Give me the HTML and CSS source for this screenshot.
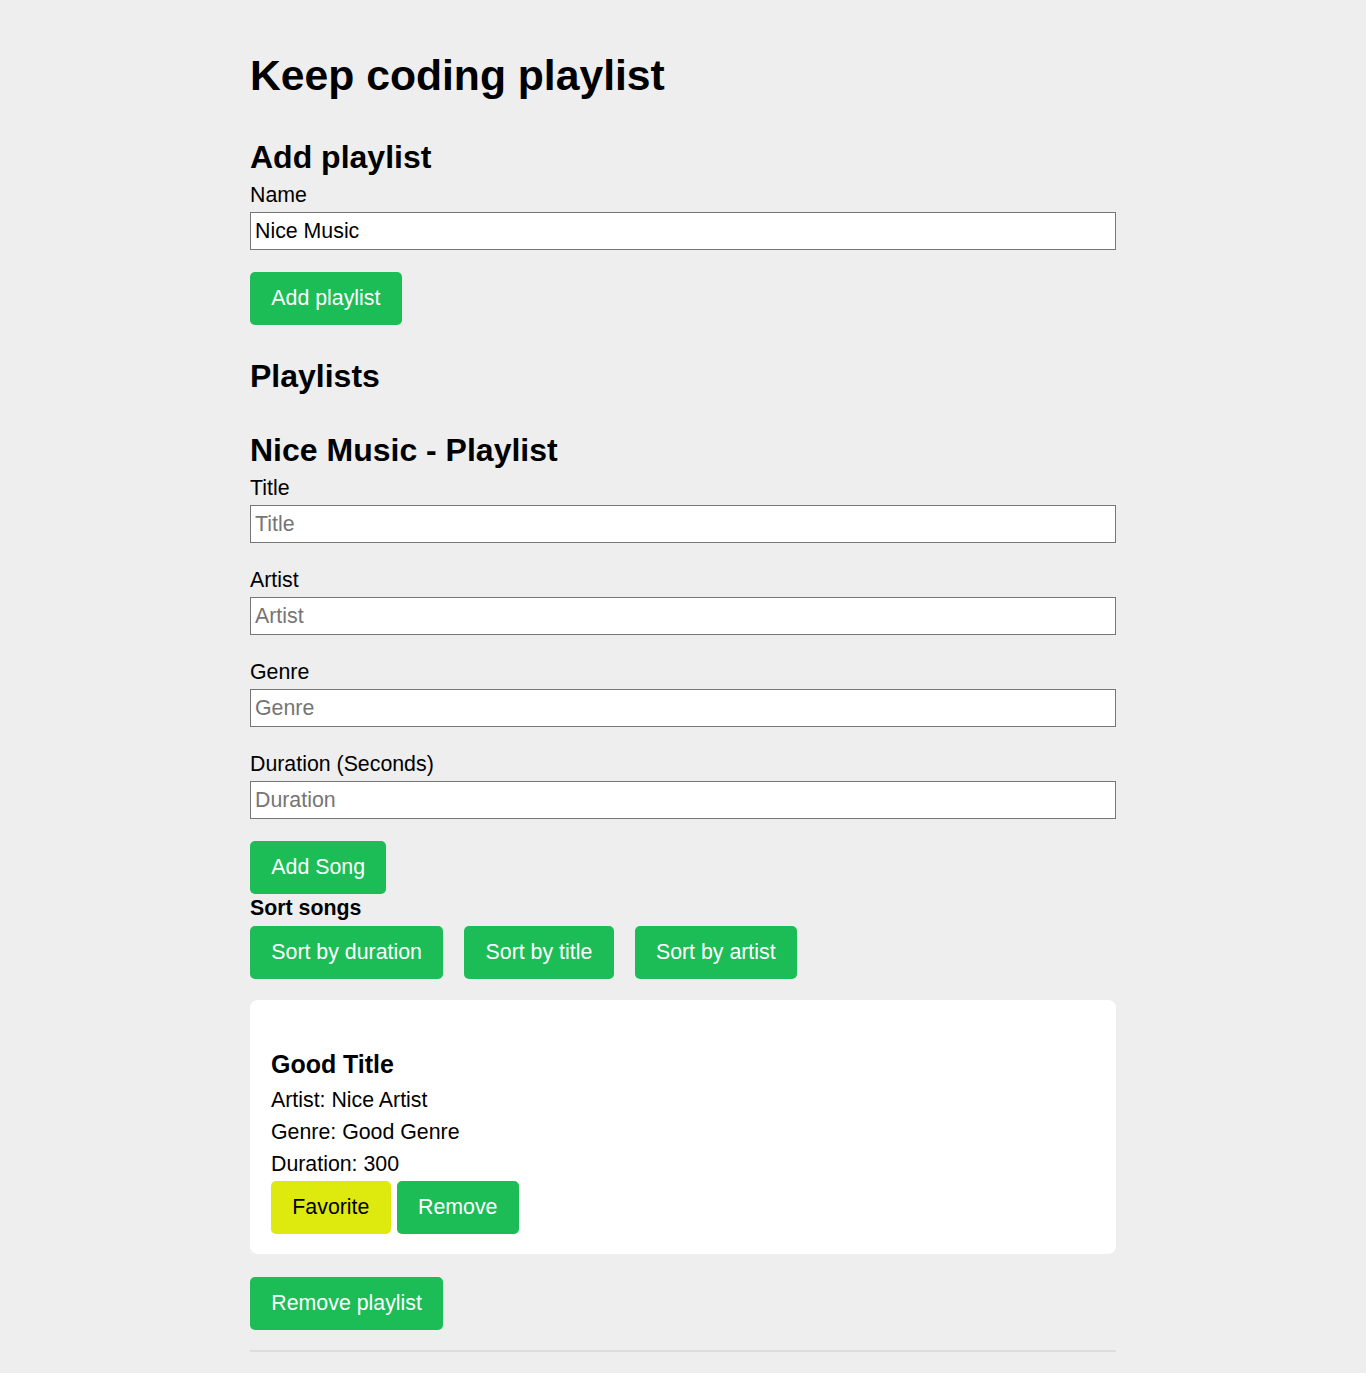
FILE: index.html
```html
<!DOCTYPE html>
<html lang="en">
<head>
<meta charset="utf-8">
<title>Keep coding playlist</title>
<link rel="stylesheet" href="styles.css">
</head>
<body>
<main class="app">
  <h1 class="app-title">Keep coding playlist</h1>

  <section class="add-playlist">
    <h2 class="section-title">Add playlist</h2>
    <label class="field-label" for="playlist-name">Name</label>
    <input class="text-input" id="playlist-name" type="text" value="Nice Music">
    <button class="btn btn-add-playlist" type="button">Add playlist</button>
  </section>

  <section class="playlists">
    <h2 class="section-title playlists-title">Playlists</h2>

    <article class="playlist">
      <h2 class="section-title playlist-title">Nice Music - Playlist</h2>

      <div class="song-form">
        <div class="field">
          <label class="field-label" for="song-title">Title</label>
          <input class="text-input" id="song-title" type="text" placeholder="Title">
        </div>
        <div class="field">
          <label class="field-label" for="song-artist">Artist</label>
          <input class="text-input" id="song-artist" type="text" placeholder="Artist">
        </div>
        <div class="field">
          <label class="field-label" for="song-genre">Genre</label>
          <input class="text-input" id="song-genre" type="text" placeholder="Genre">
        </div>
        <div class="field">
          <label class="field-label" for="song-duration">Duration (Seconds)</label>
          <input class="text-input" id="song-duration" type="text" placeholder="Duration">
        </div>
        <button class="btn btn-add-song" type="button">Add Song</button>
      </div>

      <div class="sort">
        <div class="sort-label">Sort songs</div>
        <div class="sort-buttons">
          <button class="btn" type="button">Sort by duration</button>
          <button class="btn" type="button">Sort by title</button>
          <button class="btn" type="button">Sort by artist</button>
        </div>
      </div>

      <div class="song-card">
        <h3 class="song-title">Good Title</h3>
        <p class="song-meta">Artist: Nice Artist</p>
        <p class="song-meta">Genre: Good Genre</p>
        <p class="song-meta">Duration: 300</p>
        <div class="song-actions">
          <button class="btn btn-favorite" type="button">Favorite</button>
          <button class="btn" type="button">Remove</button>
        </div>
      </div>

      <button class="btn btn-remove-playlist" type="button">Remove playlist</button>
      <hr class="divider">
    </article>
  </section>
</main>
</body>
</html>
```

FILE: styles.css
```css
* {
  box-sizing: border-box;
}

html, body {
  margin: 0;
  padding: 0;
  background: #eeeeee;
}

body {
  font-family: "Liberation Sans", Arial, sans-serif;
  font-size: 21.33px;
  line-height: normal;
  color: #000;
}

.app {
  width: 866px;
  margin: 0 auto;
  padding-bottom: 40px;
}

.app-title {
  font-size: 42.67px;
  font-weight: bold;
  margin: 51px 0 0;
  line-height: 49px;
}

.section-title {
  font-size: 32px;
  font-weight: bold;
  margin: 0;
  line-height: 37px;
}

.add-playlist .section-title {
  margin-top: 39px;
}

.field-label {
  display: block;
  line-height: 24.5px;
}

.add-playlist .field-label {
  margin-top: 6.5px;
}

.text-input {
  display: block;
  width: 100%;
  height: 38px;
  margin-top: 5px;
  padding: 0 4px;
  border: 1px solid #767676;
  border-radius: 0;
  background: #fff;
  font-family: inherit;
  font-size: 21.33px;
  color: #000;
  outline: none;
}

.text-input::placeholder {
  color: #757575;
}

.btn {
  display: inline-block;
  height: 53px;
  padding: 0 21.33px;
  border: none;
  border-radius: 5px;
  background: #1cbc56;
  color: #fff;
  font-family: inherit;
  font-size: 21.33px;
  line-height: 53px;
  cursor: pointer;
}

.btn-add-playlist {
  margin-top: 22px;
}

.playlists-title {
  margin-top: 32.7px;
}

.playlist-title {
  margin-top: 37px;
}

.song-form {
  margin-top: 7px;
}

.field + .field {
  margin-top: 24.5px;
}

.btn-add-song {
  margin-top: 21.6px;
}

.sort {
  margin-top: 1.8px;
}

.sort-label {
  font-weight: bold;
  line-height: 24.5px;
}

.sort-buttons {
  display: flex;
  gap: 21px;
  margin-top: 5.5px;
}

.song-card {
  margin-top: 21.6px;
  background: #fff;
  border-radius: 8px;
  padding: 21px 21px 20px;
}

.song-title {
  font-size: 24.96px;
  font-weight: bold;
  line-height: 28.7px;
  margin: 29px 0 0;
}

.song-meta {
  margin: 7.5px 0 0;
  line-height: 24.5px;
}

.song-title + .song-meta {
  margin-top: 8.7px;
}

.song-actions {
  display: flex;
  gap: 6px;
  margin-top: 5px;
}

.btn-favorite {
  background: #deea0d;
  color: #000;
}

.btn-remove-playlist {
  margin-top: 23px;
}

.divider {
  margin: 20.4px 0 0;
  border: none;
  height: 2px;
  background: #dddddd;
}
```
